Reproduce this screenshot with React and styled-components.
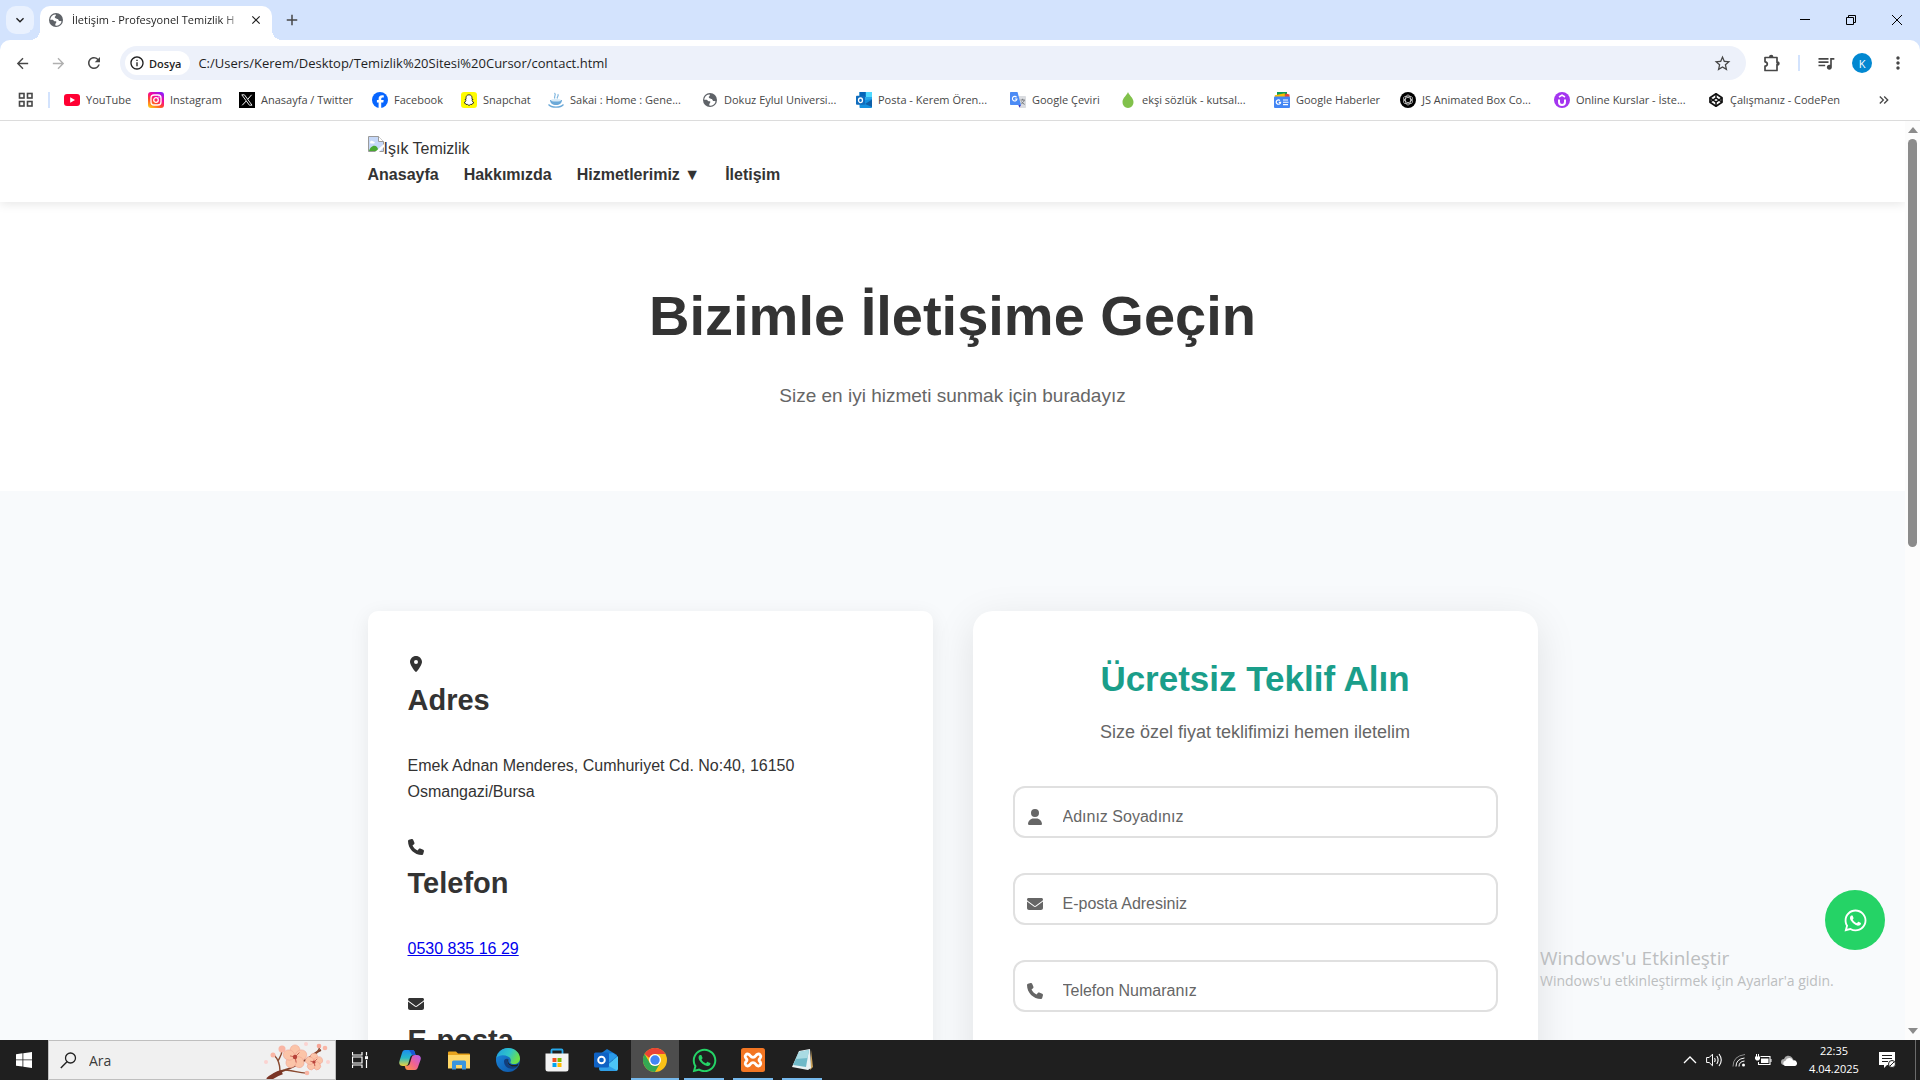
import React from 'react';
import styled, { createGlobalStyle, css } from 'styled-components';
import { FaLocationDot, FaPhone, FaEnvelope, FaUser, FaWhatsapp } from 'react-icons/fa6';
import {
  MdArrowBack, MdArrowForward, MdRefresh, MdStarOutline,
  MdQueueMusic, MdMoreVert, MdAdd, MdClose, MdInfoOutline, MdKeyboardArrowDown,
  MdKeyboardDoubleArrowRight,
} from 'react-icons/md';

const uiFont = '"Open Sans", "Noto Sans", sans-serif';
const pageFont = '"Liberation Sans", Arial, sans-serif';

const GlobalStyle = createGlobalStyle`
  *, *::before, *::after { box-sizing: border-box; }
  body { margin: 0; overflow: hidden; }
  h1, h2, h3, p, ul { margin: 0; padding: 0; }
  button { border: 0; padding: 0; background: none; font: inherit; color: inherit; }
  input { border: 0; padding: 0; outline: 0; background: none; font: inherit; color: inherit; min-width: 0; }
  svg { display: block; flex: none; }
`;

const Desktop = styled.div`
  display: flex;
  flex-direction: column;
  height: 100vh;
  font-family: ${uiFont};
  background: #fff;
`;

/* ---------- Browser chrome ---------- */

const TabStrip = styled.div`
  display: flex;
  align-items: flex-end;
  height: 40px;
  flex: none;
  padding-left: 6px;
  background: #d3e3fd;
`;

const TabSearch = styled.button`
  display: grid;
  place-items: center;
  width: 28px;
  height: 28px;
  margin: 0 6px 6px 0;
  border-radius: 10px;
  background: #e9f1fe;
  color: #1f1f1f;
`;

const Tab = styled.div`
  position: relative;
  display: flex;
  align-items: center;
  gap: 8px;
  width: 232px;
  height: 34px;
  padding: 0 8px;
  padding-bottom: 6px;
  border-radius: 10px 10px 0 0;
  background: #fff;
  &::before, &::after {
    content: '';
    position: absolute;
    bottom: 0;
    width: 10px;
    height: 10px;
  }
  &::before { left: -10px; background: radial-gradient(circle at 0 0, #d3e3fd 10px, #fff 10px); }
  &::after { right: -10px; background: radial-gradient(circle at 100% 0, #d3e3fd 10px, #fff 10px); }
`;

const TabTitle = styled.span`
  flex: 1;
  overflow: hidden;
  white-space: nowrap;
  font-size: 11px;
  line-height: 16px;
  color: #1f1f1f;
  mask-image: linear-gradient(90deg, #000 90%, transparent 102%);
`;

const PlainButton = styled.button`
  display: grid;
  place-items: center;
  width: ${(p) => p.$w || 28}px;
  height: 28px;
  color: ${(p) => p.$color || '#474747'};
`;

const NewTab = styled(PlainButton)`
  margin: 0 auto 6px 6px;
`;

const WindowButton = styled(PlainButton)`
  height: 40px;
  color: #000;
`;

const ToolbarWrap = styled.div`
  flex: none;
  background: #d3e3fd;
`;

const Toolbar = styled.div`
  display: flex;
  align-items: center;
  height: 46px;
  padding: 0 8px 0 4px;
  border-radius: 10px 10px 0 0;
  background: #fff;
`;

const Omnibox = styled.div`
  display: flex;
  align-items: center;
  flex: 1;
  height: 34px;
  margin: 0 12px 0 8px;
  padding: 0 10px 0 5px;
  border-radius: 17px;
  background: #edf1fa;
`;

const SiteChip = styled.button`
  display: flex;
  align-items: center;
  gap: 4px;
  height: 24px;
  padding: 0 9px 0 4px;
  margin-right: 8px;
  border-radius: 12px;
  background: #fff;
  font-size: 11px;
  font-weight: 600;
  color: #1f1f1f;
`;

const Address = styled.input`
  flex: 1;
  font-size: 13px;
  line-height: 20px;
  color: #1f1f1f;
`;

const Divider = styled.span`
  width: 2px;
  height: 16px;
  margin: 0 ${(p) => p.$gap}px;
  background: #d3e3fd;
`;

const Avatar = styled.button`
  display: grid;
  place-items: center;
  width: 20px;
  height: 20px;
  margin: 0 12px;
  border-radius: 50%;
  background: #0288d1;
  font-size: 11px;
  color: #fff;
`;

const Bookmarks = styled.nav`
  display: flex;
  align-items: center;
  height: 35px;
  flex: none;
  padding: 0 26px 6px 17px;
  border-bottom: 1px solid #dcdcdc;
`;

const Bookmark = styled.a`
  display: flex;
  align-items: center;
  gap: 6px;
  flex: none;
  width: ${(p) => p.$w}px;
  font-size: 11px;
  line-height: 16px;
  white-space: nowrap;
  color: #474747;
  text-decoration: none;
`;

const MoreBookmarks = styled(PlainButton)`
  width: 20px;
  margin-left: auto;
`;

/* ---------- Web page ---------- */

const Viewport = styled.div`
  position: relative;
  display: flex;
  flex: 1;
  min-height: 0;
  overflow: hidden;
`;

const Page = styled.div`
  flex: 1;
  min-width: 0;
  overflow: hidden;
  background: #f8fafc;
  font-family: ${pageFont};
  font-size: 16px;
  line-height: 26px;
  color: #333;
`;

const Container = styled.div`
  max-width: 1200px;
  margin: 0 auto;
  padding: 0 15px;
`;

const SiteHeader = styled.header`
  position: relative;
  padding: 15px 0 14px;
  background: #fff;
  box-shadow: 0 2px 10px rgba(0, 0, 0, 0.1);
`;

const Brand = styled.a`
  display: flex;
  color: #333;
  text-decoration: none;
`;

const SiteNav = styled.nav`
  display: flex;
  gap: 25px;
`;

const NavLink = styled.a`
  font-weight: 700;
  color: #333;
  text-decoration: none;
`;

const Hero = styled.section`
  padding: 69px 20px 80px;
  background: #fff;
  text-align: center;
`;

const HeroTitle = styled.h1`
  margin-bottom: 20px;
  font-size: 56px;
  line-height: 90px;
`;

const HeroText = styled.p`
  font-size: 19px;
  line-height: 30px;
  color: #666;
`;

const ContactSection = styled.section`
  padding: 120px 0;
`;

const ContactGrid = styled(Container)`
  display: grid;
  grid-template-columns: 1fr 1fr;
  gap: 40px;
`;

const Card = styled.div`
  padding: 40px;
  background: #fff;
  ${(p) => p.$raised
    ? css`border-radius: 20px; box-shadow: 0 10px 40px rgba(0, 0, 0, 0.1);`
    : css`border-radius: 10px; box-shadow: 0 5px 20px rgba(0, 0, 0, 0.08);`}
`;

const InfoItem = styled.div`
  margin-bottom: 29px;
`;

const InfoIcon = styled.div`
  display: flex;
  align-items: center;
  height: 26px;
  svg { width: auto; height: 16px; }
`;

const InfoTitle = styled.h3`
  margin-bottom: 30px;
  font-size: 29px;
  line-height: 46px;
`;

const InfoLink = styled.a`
  color: #0000ee;
`;

const FormTitle = styled.h2`
  margin-bottom: 11px;
  font-size: 35px;
  line-height: 56px;
  text-align: center;
  color: #1a9e8a;
`;

const FormText = styled.p`
  margin-bottom: 40px;
  font-size: 18px;
  line-height: 28px;
  text-align: center;
  color: #666;
`;

const Form = styled.form`
  display: grid;
  gap: 35px;
`;

const Field = styled.label`
  display: grid;
  grid-template-columns: 36px 1fr;
  align-items: center;
  height: 52px;
  padding: 10px 12px 0;
  border: 2px solid #e0e0e0;
  border-radius: 12px;
  color: #666;
  svg { width: auto; height: 16px; }
`;

const FieldInput = styled.input`
  &::placeholder { color: #666; opacity: 1; }
`;

const ChatButton = styled.a`
  position: absolute;
  right: 35px;
  bottom: 90px;
  display: grid;
  place-items: center;
  width: 60px;
  height: 60px;
  border-radius: 50%;
  background: #25d366;
  color: #fff;
`;

const Watermark = styled.div`
  position: absolute;
  right: 16px;
  bottom: 48px;
  width: 364px;
  color: #bcbec0;
  font-size: 14px;
  line-height: 22px;
`;

const WatermarkTitle = styled.div`
  font-size: 19px;
  line-height: 24px;
`;

const Scrollbar = styled.div`
  display: flex;
  flex-direction: column;
  align-items: center;
  width: 15px;
  flex: none;
  padding: 6px 0;
  background: #fcfcfc;
`;

const Thumb = styled.div`
  width: 9px;
  height: 45%;
  margin: 6px 0 auto;
  border-radius: 5px;
  background: #8b8b8b;
`;

/* ---------- Taskbar ---------- */

const Taskbar = styled.footer`
  display: flex;
  height: 40px;
  flex: none;
  background: #1f1f1f;
  color: #fff;
`;

const StartButton = styled.button`
  display: grid;
  place-items: center;
  width: 48px;
`;

const SearchBox = styled.label`
  display: flex;
  align-items: center;
  gap: 12px;
  width: 288px;
  padding-left: 11px;
  border: 1px solid #bfbfbf;
  background: #f0f0f0;
  color: #2b2b2b;
  font-size: 14px;
`;

const SearchInput = styled.input`
  flex: 1;
  &::placeholder { color: #3b3b3b; opacity: 1; }
`;

const AppRow = styled.div`
  display: flex;
  gap: 1px;
  margin-left: 2px;
`;

const TaskButton = styled.button`
  display: grid;
  place-items: center;
  width: 48px;
  background-color: ${(p) => (p.$active ? '#4d4d4d' : 'transparent')};
  ${(p) => p.$open && css`
    background-image: linear-gradient(#76b9ed, #76b9ed);
    background-repeat: no-repeat;
    background-position: bottom center;
    background-size: ${p.$active ? '48px' : '40px'} 2px;
  `}
`;

const Tray = styled.div`
  display: flex;
  align-items: center;
  gap: 9px;
  margin-left: auto;
`;

const Clock = styled.time`
  width: 54px;
  font-size: 11px;
  line-height: 18px;
  text-align: center;
`;

const NoticeButton = styled.button`
  display: grid;
  place-items: center;
  width: 34px;
`;

const ShowDesktop = styled.button`
  width: 5px;
  margin-left: 2px;
  height: 40px;
  border-left: 1px solid #6b6b6b;
`;

/* ---------- Drawings ---------- */

const Svg = ({ s = 16, w, h, box = '0 0 16 16', children }) => (
  <svg width={w || s} height={h || s} viewBox={box} fill="none" aria-hidden="true">{children}</svg>
);

const Globe = () => (
  <Svg>
    <circle cx="8" cy="8" r="7" fill="#5f6368" />
    <path d="M7 2.4C4.3 2.8 2.3 5 2.2 7.8h2.6l1.600 1.400h1.800v1.600l-1 1.200.4 1.800c3.200.2 5.400-2 6-4.400l-2.200-1.200-1.600-2H7.400L6.600 5l1.200-1.200V2.400z" fill="#fff" />
    <path d="M8.500 6.400h2l1 2h2.200" stroke="#5f6368" strokeWidth="1.400" />
  </Svg>
);

const Puzzle = () => (
  <Svg s={18} box="0 0 18 18">
    <path d="M2 3.500h12v5h.5v2H14v6H2v-4.300c1.500-.2 2.300-1 2.300-2.200S3.500 8 2 7.800z" stroke="#474747" strokeWidth="1.700" strokeLinejoin="round" />
    <path d="M6 3a2.200 2.200 0 0 1 4.400 0zM14.500 7.300a2.200 2.200 0 0 1 0 4.400z" fill="#474747" />
  </Svg>
);

const YouTube = () => (
  <Svg><rect y="2" width="16" height="12" rx="3" fill="#ff0033" /><path d="M6.200 5.300v5.400L11 8z" fill="#fff" /></Svg>
);

const Instagram = () => (
  <Svg>
    <defs>
      <linearGradient id="ig" x1="0.200" y1="1" x2="0.800" y2="0">
        <stop offset="0" stopColor="#ffc21a" /><stop offset=".35" stopColor="#ff4a2b" />
        <stop offset=".65" stopColor="#f5079b" /><stop offset="1" stopColor="#8a1dff" />
      </linearGradient>
    </defs>
    <rect width="16" height="16" rx="3" fill="url(#ig)" />
    <rect x="3" y="3" width="10" height="10" rx="3" stroke="#fff" strokeWidth="1.300" />
    <circle cx="8" cy="8" r="2.300" stroke="#fff" strokeWidth="1.300" /><circle cx="10.900" cy="5.100" r=".7" fill="#fff" />
  </Svg>
);

const XLogo = () => (
  <Svg>
    <rect width="16" height="16" fill="#000" />
    <path d="M2.800 2.800h2.600l7.600 10.400h-2.600z" stroke="#fff" strokeWidth=".9" /><path d="M12.600 2.800 8.800 7.200M7.200 9 3.200 13.300" stroke="#fff" strokeWidth="1" />
  </Svg>
);

const Facebook = () => (
  <Svg>
    <circle cx="8" cy="8" r="8" fill="#0866ff" />
    <path d="M6.600 16v-5.400H4.900V8.100h1.700V7c0-2.600 1.200-3.800 3.700-3.800.5 0 1.200.1 1.500.2v2.200h-1c-1.200 0-1.600.5-1.600 1.600v.9h2.500l-.4 2.500H9.200V16z" fill="#fff" />
  </Svg>
);

const Snapchat = () => (
  <Svg>
    <rect width="16" height="16" rx="3" fill="#fffc00" />
    <path d="M8 2.800c-2 0-3 1.400-3 3v1.500l-1 .4.9.9c-.3 1-.9 1.700-1.900 2.100l1.600.8.4 1 1.400-.1L8 13.500l1.600-1.100 1.400.1.4-1 1.600-.8c-1-.4-1.600-1.100-1.900-2.100l.9-.9-1-.4V5.800c0-1.600-1-3-3-3z" fill="#fff" stroke="#222" strokeWidth=".9" strokeLinejoin="round" />
  </Svg>
);

const Sakai = () => (
  <Svg>
    <path d="M7 6.500C5 4.500 9 3.500 6.500 1M9.500 6.500C8 5 11.500 4 9.800 2.200" stroke="#7fb6df" strokeWidth="1.200" />
    <path d="M2 8h12c0 3-2.500 5-6 5S2 11 2 8z" fill="#6ba9d8" /><ellipse cx="8" cy="8.300" rx="5" ry="1.200" fill="#d7eaf7" />
    <path d="M.5 12.500c3 3.500 12 3.500 15 0" stroke="#6ba9d8" strokeWidth="1.200" />
  </Svg>
);

const Outlook = ({ s = 16 }) => (
  <Svg s={s}>
    <rect x="3.500" y="0" width="12.500" height="12" fill="#28a8ea" /><path d="M9.700 0H16v5H9.700z" fill="#50d9ff" /><path d="M3.500 0h6.200v5H3.500z" fill="#0364b8" />
    <path d="M16 7v8.200a.8.8 0 0 1-.8.8H4.300a.8.8 0 0 1-.8-.8V9z" fill="#1490df" /><path d="m9 12 7-4.500V15z" fill="#0f5fa8" />
    <rect y="3.800" width="9" height="9" rx=".8" fill="#0f6cbd" /><ellipse cx="4.500" cy="8.300" rx="2" ry="2.300" stroke="#fff" strokeWidth="1.300" />
  </Svg>
);

const Translate = () => (
  <Svg>
    <path d="M7 4h8.200a.8.8 0 0 1 .8.8v10.400a.8.8 0 0 1-.8.8H10z" fill="#dadce0" /><path d="M10.500 8h4.300M12.600 6.800V8m1.700 0c-.4 1.800-1.700 3-3 3.800m.2-2.300c.6 1.300 1.700 2.300 3.200 2.900" stroke="#6f7378" strokeWidth=".9" />
    <path d="M.8 0h6.700l3.500 13H.8a.8.8 0 0 1-.8-.8V.8A.8.8 0 0 1 .8 0z" fill="#4c8bf5" /><path d="m8.300 13h2.700L9.500 15.800z" fill="#3c3cc8" />
    <path d="M6.600 5.300A2.300 2.300 0 1 0 7 7H4.800" stroke="#fff" strokeWidth="1.100" />
  </Svg>
);

const Drop = () => <Svg><path d="M8 0c1 3 5.500 6 5.500 10A5.600 5.600 0 0 1 8 16a5.600 5.600 0 0 1-5.500-6C2.500 6 7 3 8 0z" fill="#81c14b" /></Svg>;

const News = () => (
  <Svg>
    <path d="M3 0h10v4H3z" fill="#0f9d58" /><path d="m12 1.500 3.500 1V6H9z" fill="#ea4335" /><path d="m.8 3.200 10-2V6H.8z" fill="#fbbc04" />
    <rect y="4.500" width="16" height="11.500" rx="1" fill="#4285f4" />
    <path d="M6 8.500A2.200 2.200 0 1 0 6.600 10.400H4.800" stroke="#fff" strokeWidth="1.200" /><path d="M9 8h5M9 10.300h5.500M9 12.600h5" stroke="#fff" strokeWidth="1.100" />
  </Svg>
);

const KnotLogo = () => (
  <Svg>
    <circle cx="8" cy="8" r="8" fill="#000" />
    {[0, 60, 120].map((a) => <ellipse key={a} cx="8" cy="8" rx="2.600" ry="5" stroke="#e6e6e6" strokeWidth=".7" transform={`rotate(${a} 8 8)`} />)}
  </Svg>
);

const Udemy = () => (
  <Svg><circle cx="8" cy="8" r="8" fill="#a435f0" /><path d="M5 7.500V10a3 3 0 0 0 6 0V7.500" stroke="#fff" strokeWidth="2" /><path d="m5 5 3-1.800L11 5" stroke="#fff" strokeWidth="1.500" /></Svg>
);

const CodePen = () => (
  <Svg>
    <path d="M8 1.800 14 5.800v4.400L8 14.200 2 10.200V5.800z" stroke="#111" strokeWidth="1.700" strokeLinejoin="round" /><path d="m2 5.800 6 4.200 6-4.200M2 10.200 8 6l6 4.200M8 1.800V6m0 4v4.200" stroke="#111" strokeWidth="1.500" />
  </Svg>
);

const AppsGrid = () => (
  <Svg s={18} box="0 0 18 18">
    {[[3, 3], [11, 3], [3, 11], [11, 11]].map(([x, y]) => <rect key={`${x}${y}`} x={x - 0.5} y={y - 0.5} width="4.500" height="4.500" stroke="#474747" strokeWidth="1.600" />)}
  </Svg>
);

const BrokenImage = () => (
  <Svg>
    <path d="M.5.5h10l5 5v10H.5z" fill="#c6d8f8" stroke="#9a9a9a" />
    <path d="M10.500.5v5h5" fill="#fff" stroke="#9a9a9a" /><path d="M2 6.500c0-2 2.500-2.500 3-1 1.500-.5 2.500 1.500 1 2H2.500z" fill="#fff" />
    <path d="M1 15c1-4 5-7 8-4l2 4z" fill="#4aa832" /><path d="m7 16 9-8v3l-5 5z" fill="#fff" />
  </Svg>
);

const WindowsLogo = () => (
  <Svg><path d="M0 2.200 6.500 1.300v6.200H0zM7.300 1.200 16 0v7.500H7.300zM0 8.300h6.500v6.300L0 13.700zM7.300 8.300H16V16l-8.700-1.200z" fill="#fff" /></Svg>
);

const Magnifier = () => (
  <Svg s={17} box="0 0 17 17"><circle cx="10.500" cy="6" r="5" stroke="#222" strokeWidth="1.300" /><path d="M7 9.700.8 16" stroke="#222" strokeWidth="1.400" /></Svg>
);

const Flower = ({ x, y, r }) => (
  <g transform={`translate(${x} ${y})`}>
    {[0, 72, 144, 216, 288].map((a) => <ellipse key={a} cx="0" cy={-r * 0.58} rx={r * 0.46} ry={r * 0.52} fill="#fbc4a8" stroke="#ee9c8c" strokeWidth=".5" transform={`rotate(${a})`} />)}
    <circle r={r * 0.2} fill="#b8423a" />
    <path d={`M0 0 ${r * 0.4} ${-r * 0.4}M0 0 ${-r * 0.45} ${-r * 0.1}M0 0 ${r * 0.1} ${r * 0.5}`} stroke="#b8423a" strokeWidth=".7" />
  </g>
);

const Blossom = () => (
  <Svg w={72} h={38} box="0 0 72 38">
    <path d="M8 36c5-4 10-6 14-7 7-2 14-6 22-11 5-3 9-7 14-9" stroke="#7b3d28" strokeWidth="2" />
    <path d="M5 39c4-4 8-6 14-8" stroke="#7a3526" strokeWidth="5" />
    <path d="M17 30c0-8-2-12-6-16M15 20c2-4 4-6 4-11M22 29c8 0 16 4 23 3M48 14c5 0 8-4 9-9" stroke="#8a4a30" strokeWidth="1.400" />
    <Flower x={32} y={16} r={11} /><Flower x={51} y={21} r={8} />
    <circle cx="19" cy="8" r="3.500" fill="#f9b5a4" /><circle cx="10" cy="14" r="2.500" fill="#f9b5a4" /><circle cx="56" cy="5" r="2.300" fill="#f6a596" />
    <circle cx="62" cy="7" r="2.300" fill="#f9b5a4" /><circle cx="44" cy="32" r="2.300" fill="#f9b5a4" />
    <circle cx="43" cy="3" r="2" fill="#fbd3d0" /><circle cx="3" cy="21" r="2" fill="#fbd3d0" /><circle cx="65" cy="21" r="2" fill="#fbd3d0" />
  </Svg>
);

const TaskView = () => (
  <Svg><path d="M.5 0v3h9.500V0M.5 16v-3h9.500v3M.5 5h9.500v6H.5zM14.500 0v3.500M14.500 8v8" stroke="#fff" strokeWidth="1.200" /><rect x="13" y="4.200" width="3" height="3" fill="#fff" /></Svg>
);

const Copilot = () => (
  <Svg s={22} box="0 0 22 22">
    <defs>
      <linearGradient id="cpa" x1="0" y1="0" x2="0" y2="1"><stop offset="0" stopColor="#1c8df0" /><stop offset=".5" stopColor="#28b9c8" /><stop offset="1" stopColor="#f0d23a" /></linearGradient>
      <linearGradient id="cpb" x1="1" y1="0" x2="0" y2="1"><stop offset="0" stopColor="#b45cf5" /><stop offset=".5" stopColor="#f06292" /><stop offset="1" stopColor="#ff9a3c" /></linearGradient>
    </defs>
    <path d="M6 1h7c2 0 2.500 1 3 3l.5 2h-2c-2 0-3 1-3.500 3l-1.500 5c-.5 2-1.500 3-3.500 3H4c-3 0-4.500-2-3.500-5L3 4c.6-2 1.500-3 3-3z" fill="url(#cpa)" />
    <path d="M16 21H9c-2 0-2.500-1-3-3l-.3-1.200H8c1.500 0 2.500-1 3-2.800l1.500-5c.5-2 1.500-3 3.500-3h2c3 0 4.500 2 3.500 5L19 18c-.6 2-1.500 3-3 3z" fill="url(#cpb)" />
    <path d="M10 1h3c2 0 2.500 1 3 3l.5 2h-2.300c-1.200 0-1.700-.5-2.200-2z" fill="#1a56d6" />
  </Svg>
);

const Folder = () => (
  <Svg w={22} h={19} box="0 0 22 19">
    <path d="M0 1.500A1 1 0 0 1 1 .5h7l2 2h11a1 1 0 0 1 1 1V17H0z" fill="#e8a31c" /><path d="M0 4h22v13.500H0z" fill="#ffd767" />
    <path d="M4 18.500V11a1.500 1.500 0 0 1 1.500-1.500h11A1.500 1.500 0 0 1 18 11v7.500h-4V14H8v4.500z" fill="#3a95dd" />
  </Svg>
);

const Edge = () => (
  <Svg s={24} box="0 0 24 24">
    <defs>
      <linearGradient id="ea" x1="0" y1="0" x2="1" y2=".4"><stop offset="0" stopColor="#1f9de0" /><stop offset=".6" stopColor="#30c5c8" /><stop offset="1" stopColor="#6be04a" /></linearGradient>
      <linearGradient id="eb" x1="0" y1="0" x2="1" y2="1"><stop offset="0" stopColor="#1b8be0" /><stop offset="1" stopColor="#0d50a0" /></linearGradient>
    </defs>
    <circle cx="12" cy="12" r="12" fill="url(#eb)" />
    <path d="M.3 10C1.500 4 6.500 0 12 0c7 0 12 5 12 10.500 0 3.500-2.500 5.500-6 5.500-3 0-4-1-3.500-2 .8-1.500.5-4-2.500-5.500C8 6.500 2.500 7 .3 10z" fill="url(#ea)" />
    <path d="M8 13c0 6 5 8.500 10 7.500 2-.5 3-1.500 4-2.500 0 0-3 1-6 .3C12 17.500 10.500 14 12 11c-2-.8-4 .5-4 2z" fill="#123e7c" />
    <path d="M12.500 11c-1 3 .5 6 5 6 2 0 4-.5 5.200-1.500L21.500 18c-4 1.500-10.500 0-10-6z" fill="#1f1f1f" />
  </Svg>
);

const Store = () => (
  <Svg w={24} h={24} box="0 0 24 24">
    <path d="M6.500 6V2.500a1 1 0 0 1 1-1h9a1 1 0 0 1 1 1V6" stroke="#28a8ea" strokeWidth="1.800" /><path d="M.5 5.500h23V21a2.500 2.500 0 0 1-2.500 2.500H3A2.500 2.500 0 0 1 .5 21z" fill="#f3f3f3" />
    <path d="M7.500 10h4v4h-4z" fill="#f25022" /><path d="M12.500 10h4v4h-4z" fill="#7fba00" /><path d="M7.500 15h4v4h-4z" fill="#00a4ef" /><path d="M12.500 15h4v4h-4z" fill="#ffb900" />
  </Svg>
);

const OutlookNew = () => (
  <Svg w={24} h={22} box="0 0 24 22">
    <path d="M4 6.500 13 0l10 6v6H4z" fill="#1577cf" /><path d="M8 5h11v10H8z" fill="#0a4fa0" /><path d="m11 5 8-1 4 3-9 8-5-2z" fill="#2a9bea" />
    <path d="M24 7v12.500a2.500 2.500 0 0 1-2.500 2.500H6z" fill="#4cc5f5" /><path d="m6 12 17 9.500c-.5.300-1 .5-1.500.5h-14A2.500 2.500 0 0 1 5 19.500z" fill="#2f9fe8" />
    <rect y="3.500" width="15" height="15" rx="1.500" fill="#0f62c4" /><circle cx="7.500" cy="11" r="3.300" stroke="#fff" strokeWidth="1.900" />
  </Svg>
);

const Chrome = () => (
  <Svg s={24} box="0 0 24 24">
    <circle cx="12" cy="12" r="12" fill="#fbc116" /><path d="M1.600 6A12 12 0 0 1 22.400 6H12a6 6 0 0 0-5.700 4z" fill="#ea4335" /><path d="M1.600 6A12 12 0 0 0 12 24l5.200-9A6 6 0 0 1 6.800 15z" fill="#34a853" />
    <circle cx="12" cy="12" r="6" fill="#fff" /><circle cx="12" cy="12" r="4.700" fill="#4285f4" />
  </Svg>
);

const Xampp = () => (
  <Svg s={24} box="0 0 24 24">
    <rect width="24" height="24" rx="2.500" fill="#f37623" />
    <path d="M8 6.500c-2.500-1.500-4.500 1-3.500 3 .4.900 1.500 1.500 1.500 2.500s-1.100 1.600-1.500 2.500c-1 2 1 4.500 3.500 3 1.300-.8 1.600-2.800 4-2.800s2.700 2 4 2.800c2.500 1.500 4.500-1 3.500-3-.4-.9-1.500-1.500-1.500-2.500s1.100-1.600 1.500-2.500c1-2-1-4.500-3.500-3-1.300.8-1.600 2.800-4 2.800s-2.700-2-4-2.800z" stroke="#fff" strokeWidth="2.800" strokeLinejoin="round" />
  </Svg>
);

const Notepad = () => (
  <Svg w={24} h={24} box="0 0 24 24">
    <path d="m21 2 2 17-3 3z" fill="#c9a15a" /><path d="m9 3 11-2 1 19-3 2-16-3z" fill="#e9f1f3" /><path d="m9 4 10-2-3 17-13-2z" fill="#6fb9c8" /><path d="m9 4 10-2-1.500 8L6 11z" fill="#a9dbe3" />
  </Svg>
);

const WhatsAppMark = () => <FaWhatsapp size={27} color="#25d366" />;

const ChevronUp = () => <Svg w={14} h={8} box="0 0 14 8"><path d="m1 7 6-6 6 6" stroke="#fff" strokeWidth="1.300" /></Svg>;
const Speaker = () => (
  <Svg w={17} h={14} box="0 0 17 14"><path d="M.6 4.500h2.600L6.500 1.200v11.600L3.200 9.500H.6z" stroke="#fff" /><path d="M8.500 5q1.300 2 0 4M10.800 3q2.600 4 0 8M13 1q4.500 6 0 12" stroke="#fff" strokeWidth="1.100" /></Svg>
);
const Wifi = () => (
  <Svg w={14} h={14} box="0 0 14 14"><circle cx="11.500" cy="12" r="1.500" fill="#fff" /><path d="M7 13.500q0-5 5.500-5.500M4 13.500q0-7.500 8.500-8.500" stroke="#fff" /><path d="M1 13.500Q1 3 13 1.500" stroke="#8c8c8c" /></Svg>
);
const Battery = () => (
  <Svg w={17} h={13} box="0 0 17 13"><path d="M5.500 2.500h9.500v8H3.500V8" stroke="#fff" strokeWidth="1.100" /><path d="M6 4.500h7.500v4.500H6z" fill="#fff" /><path d="M15.500 5h1v3h-1zM0 2.500h5v2.500L3.500 6.500h-2L0 5zM1 0h1v3H1zM3 0h1v3H3z" fill="#fff" /></Svg>
);
const Cloud = () => (
  <Svg w={17} h={11} box="0 0 17 11"><path d="M3 10a3 3 0 0 1 0-6 4.600 4.600 0 0 1 8-1.500l2 3z" fill="#a9a9a9" /><path d="M4 11a2.700 2.700 0 0 1 .5-5.200A4 4 0 0 1 12 5.500a2.800 2.800 0 1 1 2 5.500z" fill="#fff" /></Svg>
);
const Notice = () => (
  <Svg w={17} h={16} box="0 0 17 16"><path d="M0 0h16v13H8l-3 3v-3H0z" fill="#fff" /><path d="M3 3.500h10M3 6.500h10M3 9.500h6" stroke="#1f1f1f" /><circle cx="13" cy="12" r="3.500" fill="#fff" stroke="#1f1f1f" /><path d="m11 14 4-4" stroke="#1f1f1f" /></Svg>
);

/* ---------- Data ---------- */

const bookmarks = [
  ['YouTube', YouTube, 84], ['Instagram', Instagram, 91], ['Anasayfa / Twitter', XLogo, 133],
  ['Facebook', Facebook, 89], ['Snapchat', Snapchat, 87], ['Sakai : Home : Gene...', Sakai, 154],
  ['Dokuz Eylul Universi...', Globe, 154], ['Posta - Kerem Ören...', Outlook, 154], ['Google Çeviri', Translate, 110],
  ['ekşi sözlük - kutsal...', Drop, 154], ['Google Haberler', News, 126], ['JS Animated Box Co...', KnotLogo, 154],
  ['Online Kurslar - İste...', Udemy, 154], ['Çalışmanız - CodePen', CodePen, 154],
];

const fields = [
  ['Adınız Soyadınız', FaUser, 'text'], ['E-posta Adresiniz', FaEnvelope, 'email'], ['Telefon Numaranız', FaPhone, 'tel'],
];

const apps = [
  ['Copilot', Copilot], ['Dosya Gezgini', Folder], ['Edge', Edge], ['Store', Store],
  ['Outlook', OutlookNew], ['Chrome', Chrome, true, true], ['WhatsApp', WhatsAppMark, true],
  ['XAMPP', Xampp, true], ['Notepad', Notepad, true],
];

export default function App() {
  return (
    <Desktop>
      <GlobalStyle />
      <TabStrip>
        <TabSearch aria-label="Sekme ara"><MdKeyboardArrowDown size={16} /></TabSearch>
        <Tab>
          <Globe />
          <TabTitle>İletişim - Profesyonel Temizlik H</TabTitle>
          <PlainButton $w={16} $color="#1f1f1f" aria-label="Sekmeyi kapat"><MdClose size={14} /></PlainButton>
        </Tab>
        <NewTab aria-label="Yeni sekme"><MdAdd size={18} /></NewTab>
        <WindowButton $w={46} aria-label="Simge durumuna küçült"><Svg s={10} box="0 0 10 10"><path d="M0 4.500h10" stroke="#000" /></Svg></WindowButton>
        <WindowButton $w={46} aria-label="Önceki boyut"><Svg s={10} box="0 0 10 10"><path d="M.5 2.500h7v7h-7zM2.500 2.500v-2h7v7h-2" stroke="#000" /></Svg></WindowButton>
        <WindowButton $w={46} aria-label="Kapat"><Svg s={10} box="0 0 10 10"><path d="m0 0 10 10M10 0 0 10" stroke="#000" /></Svg></WindowButton>
      </TabStrip>
      <ToolbarWrap>
        <Toolbar>
          <PlainButton $w={36} aria-label="Geri"><MdArrowBack size={17} /></PlainButton>
          <PlainButton $w={36} $color="#b0b0b0" aria-label="İleri"><MdArrowForward size={17} /></PlainButton>
          <PlainButton $w={36} aria-label="Yenile"><MdRefresh size={18} /></PlainButton>
          <Omnibox>
            <SiteChip><MdInfoOutline size={16} />Dosya</SiteChip>
            <Address aria-label="Adres çubuğu" defaultValue="C:/Users/Kerem/Desktop/Temizlik%20Sitesi%20Cursor/contact.html" />
            <PlainButton aria-label="Yer işareti ekle"><MdStarOutline size={19} /></PlainButton>
          </Omnibox>
          <PlainButton aria-label="Uzantılar"><Puzzle /></PlainButton>
          <Divider $gap={12} />
          <PlainButton aria-label="Medya"><MdQueueMusic size={20} /></PlainButton>
          <Avatar aria-label="Profil">K</Avatar>
          <PlainButton aria-label="Menü"><MdMoreVert size={20} /></PlainButton>
        </Toolbar>
      </ToolbarWrap>
      <Bookmarks>
        <PlainButton $w={17} aria-label="Uygulamalar"><AppsGrid /></PlainButton>
        <Divider $gap={14} />
        {bookmarks.map(([name, Icon, width]) => (
          <Bookmark key={name} href="#" $w={width}><Icon />{name}</Bookmark>
        ))}
        <MoreBookmarks aria-label="Diğer yer işaretleri"><MdKeyboardDoubleArrowRight size={16} /></MoreBookmarks>
      </Bookmarks>

      <Viewport>
        <Page>
          <SiteHeader>
            <Container>
              <Brand href="#"><BrokenImage />Işık Temizlik</Brand>
              <SiteNav>
                <NavLink href="#">Anasayfa</NavLink>
                <NavLink href="#">Hakkımızda</NavLink>
                <NavLink href="#">Hizmetlerimiz ▼</NavLink>
                <NavLink href="#">İletişim</NavLink>
              </SiteNav>
            </Container>
          </SiteHeader>
          <Hero>
            <HeroTitle>Bizimle İletişime Geçin</HeroTitle>
            <HeroText>Size en iyi hizmeti sunmak için buradayız</HeroText>
          </Hero>
          <ContactSection>
            <ContactGrid>
              <Card>
                <InfoItem>
                  <InfoIcon><FaLocationDot /></InfoIcon>
                  <InfoTitle>Adres</InfoTitle>
                  <p>Emek Adnan Menderes, Cumhuriyet Cd. No:40, 16150 Osmangazi/Bursa</p>
                </InfoItem>
                <InfoItem>
                  <InfoIcon><FaPhone /></InfoIcon>
                  <InfoTitle>Telefon</InfoTitle>
                  <p><InfoLink href="#">0530 835 16 29</InfoLink></p>
                </InfoItem>
                <InfoItem>
                  <InfoIcon><FaEnvelope /></InfoIcon>
                  <InfoTitle>E-posta</InfoTitle>
                </InfoItem>
              </Card>
              <Card $raised>
                <FormTitle>Ücretsiz Teklif Alın</FormTitle>
                <FormText>Size özel fiyat teklifimizi hemen iletelim</FormText>
                <Form>
                  {fields.map(([label, Icon, type]) => (
                    <Field key={label}>
                      <Icon />
                      <FieldInput type={type} aria-label={label} placeholder={label} />
                    </Field>
                  ))}
                </Form>
              </Card>
            </ContactGrid>
          </ContactSection>
        </Page>
        <Scrollbar>
          <Svg w={10} h={6} box="0 0 10 6"><path d="m0 6 5-6 5 6z" fill="#8b8b8b" /></Svg>
          <Thumb />
          <Svg w={10} h={6} box="0 0 10 6"><path d="m0 0 5 6 5-6z" fill="#8b8b8b" /></Svg>
        </Scrollbar>
        <Watermark>
          <WatermarkTitle>Windows'u Etkinleştir</WatermarkTitle>
          Windows'u etkinleştirmek için Ayarlar'a gidin.
        </Watermark>
        <ChatButton href="#" aria-label="WhatsApp"><FaWhatsapp size={25} /></ChatButton>
      </Viewport>

      <Taskbar>
        <StartButton aria-label="Başlat"><WindowsLogo /></StartButton>
        <SearchBox>
          <Magnifier />
          <SearchInput type="text" aria-label="Ara" placeholder="Ara" />
          <Blossom />
        </SearchBox>
        <TaskButton aria-label="Görev görünümü"><TaskView /></TaskButton>
        <AppRow>
          {apps.map(([name, Icon, open, active]) => (
            <TaskButton key={name} aria-label={name} $open={open} $active={active}><Icon /></TaskButton>
          ))}
        </AppRow>
        <Tray>
          <ChevronUp /><Speaker /><Wifi /><Battery /><Cloud />
          <Clock>22:35<br />4.04.2025</Clock>
          <NoticeButton aria-label="Bildirimler"><Notice /></NoticeButton>
          <ShowDesktop aria-label="Masaüstünü göster" />
        </Tray>
      </Taskbar>
    </Desktop>
  );
}
